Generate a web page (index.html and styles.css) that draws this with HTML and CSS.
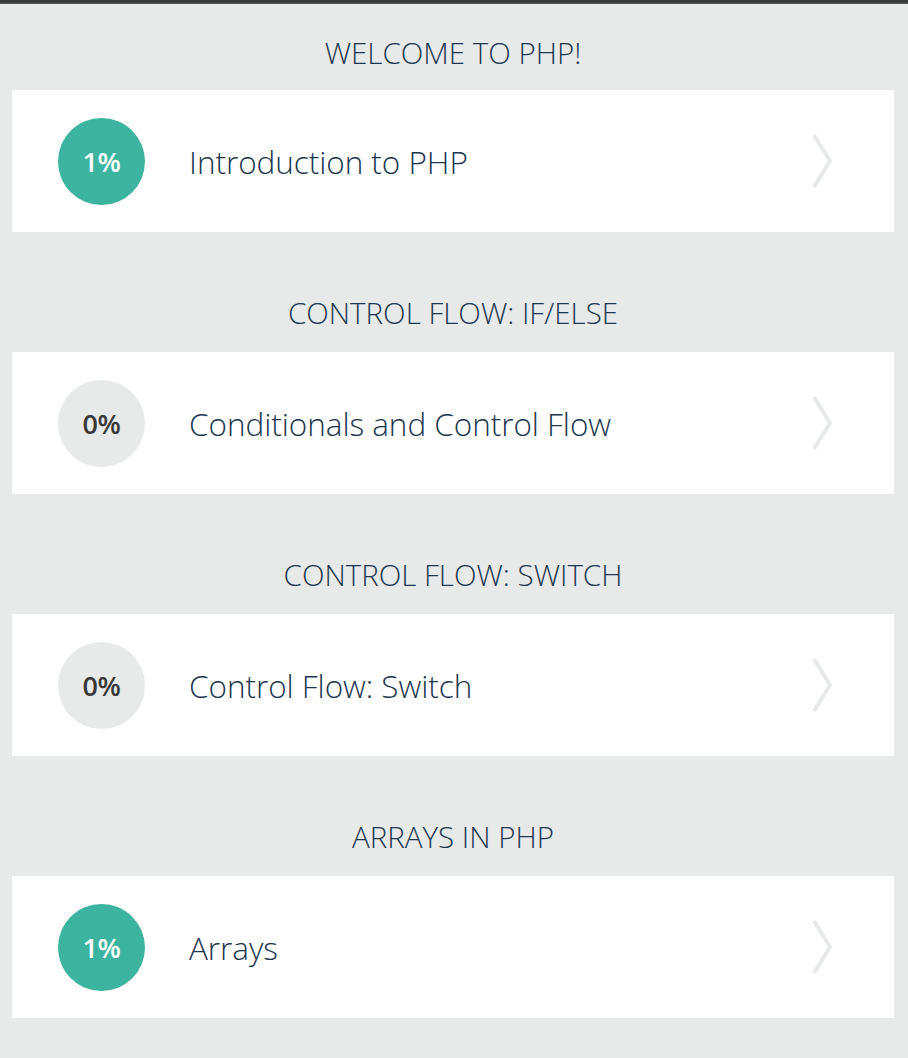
FILE: index.html
```html
<!DOCTYPE html>
<html>
<head>
<meta charset="utf-8">
<link rel="stylesheet" href="styles.css">
</head>
<body>
<div class="topbar"></div>
<main class="list">
  <section class="unit">
    <h2 class="unit-title">WELCOME TO PHP!</h2>
    <a class="card">
      <span class="badge badge-done">1%</span>
      <span class="card-title">Introduction to PHP</span>
      <svg class="chev" viewBox="0 0 24 60" width="24" height="60"><polyline points="4,4 20,30 4,56" fill="none" stroke="#e8e9e9" stroke-width="4"/></svg>
    </a>
  </section>
  <section class="unit">
    <h2 class="unit-title">CONTROL FLOW: IF/ELSE</h2>
    <a class="card">
      <span class="badge">0%</span>
      <span class="card-title">Conditionals and Control Flow</span>
      <svg class="chev" viewBox="0 0 24 60" width="24" height="60"><polyline points="4,4 20,30 4,56" fill="none" stroke="#e8e9e9" stroke-width="4"/></svg>
    </a>
  </section>
  <section class="unit">
    <h2 class="unit-title">CONTROL FLOW: SWITCH</h2>
    <a class="card">
      <span class="badge">0%</span>
      <span class="card-title">Control Flow: Switch</span>
      <svg class="chev" viewBox="0 0 24 60" width="24" height="60"><polyline points="4,4 20,30 4,56" fill="none" stroke="#e8e9e9" stroke-width="4"/></svg>
    </a>
  </section>
  <section class="unit">
    <h2 class="unit-title">ARRAYS IN PHP</h2>
    <a class="card">
      <span class="badge badge-done">1%</span>
      <span class="card-title">Arrays</span>
      <svg class="chev" viewBox="0 0 24 60" width="24" height="60"><polyline points="4,4 20,30 4,56" fill="none" stroke="#e8e9e9" stroke-width="4"/></svg>
    </a>
  </section>
</main>
</body>
</html>
```
FILE: styles.css
```css
html, body {
  margin: 0;
  padding: 0;
  background: #e8eaea;
  font-family: "Open Sans", "Liberation Sans", sans-serif;
}
.topbar {
  height: 4px;
  background: linear-gradient(#333, #444 75%, #666);
}
.list {
  display: flex;
  flex-direction: column;
  gap: 33px;
  padding: 0 14px 0 12px;
}
.unit {
  display: flex;
  flex-direction: column;
}
.unit-title {
  margin: 0;
  height: 87px;
  display: flex;
  align-items: center;
  justify-content: center;
  padding-top: 8px;
  box-sizing: border-box;
  font-size: 29.5px;
  font-weight: 300;
  letter-spacing: 0;
  color: #1f3850;
}
.unit:first-child .unit-title {
  height: 86px;
  padding-top: 10px;
}
.card {
  height: 142px;
  background: #fff;
  display: flex;
  align-items: center;
  padding: 0 60px 0 46px;
}
.badge {
  width: 87px;
  height: 87px;
  border-radius: 50%;
  background: #e8eaea;
  color: #383838;
  display: flex;
  align-items: center;
  justify-content: center;
  font-size: 27px;
  font-weight: 600;
  letter-spacing: -0.3px;
  flex: none;
}
.badge-done {
  background: #3db4a0;
  color: #fff;
  font-weight: 600;
}
.card-title {
  flex: 1;
  margin-left: 44px;
  font-size: 31.5px;
  font-weight: 300;
  letter-spacing: -0.05px;
  color: #1c3750;
}
.chev {
  flex: none;
}
```
